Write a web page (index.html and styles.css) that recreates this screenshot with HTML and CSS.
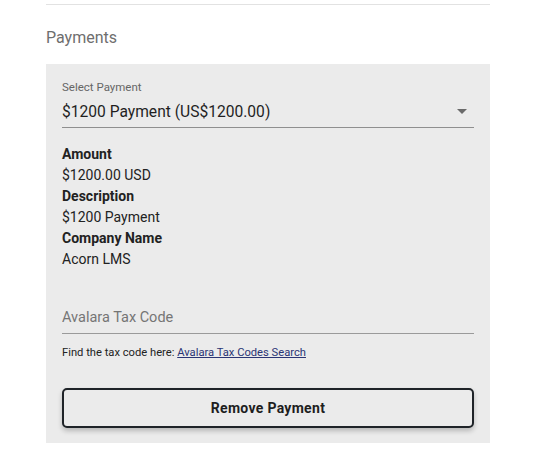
FILE: index.html
```html
<!DOCTYPE html>
<html>
<head>
<meta charset="utf-8">
<link rel="stylesheet" href="styles.css">
</head>
<body>
<div class="page">
  <hr class="rule">
  <h2 class="section-title">Payments</h2>
  <div class="panel">
    <div class="select-field">
      <div class="select-label">Select Payment</div>
      <div class="select-control">
        <span class="select-value">$1200 Payment (US$1200.00)</span>
        <span class="select-arrow"></span>
      </div>
    </div>
    <dl class="details">
      <dt>Amount</dt>
      <dd>$1200.00 USD</dd>
      <dt>Description</dt>
      <dd>$1200 Payment</dd>
      <dt>Company Name</dt>
      <dd>Acorn LMS</dd>
    </dl>
    <div class="tax-field">
      <input class="tax-input" type="text" placeholder="Avalara Tax Code">
    </div>
    <p class="hint">Find the tax code here: <a href="#" class="hint-link">Avalara Tax Codes Search</a></p>
    <button class="remove-btn" type="button">Remove Payment</button>
  </div>
</div>
</body>
</html>
```

FILE: styles.css
```css
* { box-sizing: border-box; }
html, body { margin: 0; padding: 0; background: #fff; }
body {
  font-family: Roboto, "Liberation Sans", Arial, sans-serif;
  color: #212121;
}
.page {
  width: 444px;
  margin-left: 46px;
  padding-top: 4px;
}
.rule {
  margin: 0;
  border: 0;
  border-top: 1px solid #e2e2e2;
}
.section-title {
  margin: 22px 0 0;
  font-size: 16px;
  font-weight: 400;
  line-height: 22px;
  color: #6e6e6e;
  height: 37px;
}
.panel {
  background: #ebebeb;
  padding: 15px 16px 15px;
}
.select-label {
  font-size: 11.5px;
  line-height: 16px;
  color: #666;
}
.select-control {
  display: flex;
  align-items: center;
  justify-content: space-between;
  height: 30px;
  padding: 2px 7px 4px 0;
  border-bottom: 1px solid #8f8f8f;
  margin-top: 3px;
}
.select-value {
  font-size: 15.6px;
  line-height: 24px;
  color: #1f1f1f;
}
.select-arrow {
  width: 0;
  height: 0;
  border-left: 5px solid transparent;
  border-right: 5px solid transparent;
  border-top: 5px solid #6a6a6a;
}
.details {
  margin: 16px 0 0;
  font-size: 14px;
  line-height: 21px;
}
.details dt {
  font-weight: 700;
  color: #222;
}
.details dd {
  margin: 0;
  color: #222;
}
.tax-field {
  margin-top: 35px;
}
.tax-input {
  display: block;
  width: 100%;
  border: 0;
  border-bottom: 1px solid #9a9a9a;
  background: transparent;
  padding: 0 0 4px;
  font-family: inherit;
  font-size: 14.5px;
  line-height: 24px;
  height: 29px;
  color: #212121;
  outline: none;
}
.tax-input::placeholder { color: #757575; opacity: 1; }
.hint {
  margin: 11px 0 0;
  font-size: 11.2px;
  line-height: 16px;
  color: #222;
}
.hint-link {
  color: #2a3575;
  text-decoration: underline;
}
.remove-btn {
  display: block;
  width: 100%;
  height: 40px;
  margin-top: 27px;
  border: 2px solid #1f2328;
  border-radius: 5px;
  background: #ebebeb;
  box-shadow: 0 3px 5px rgba(0,0,0,0.22);
  font-family: inherit;
  font-size: 14px;
  font-weight: 700;
  color: #1e1e1e;
  letter-spacing: 0.3px;
}
```
